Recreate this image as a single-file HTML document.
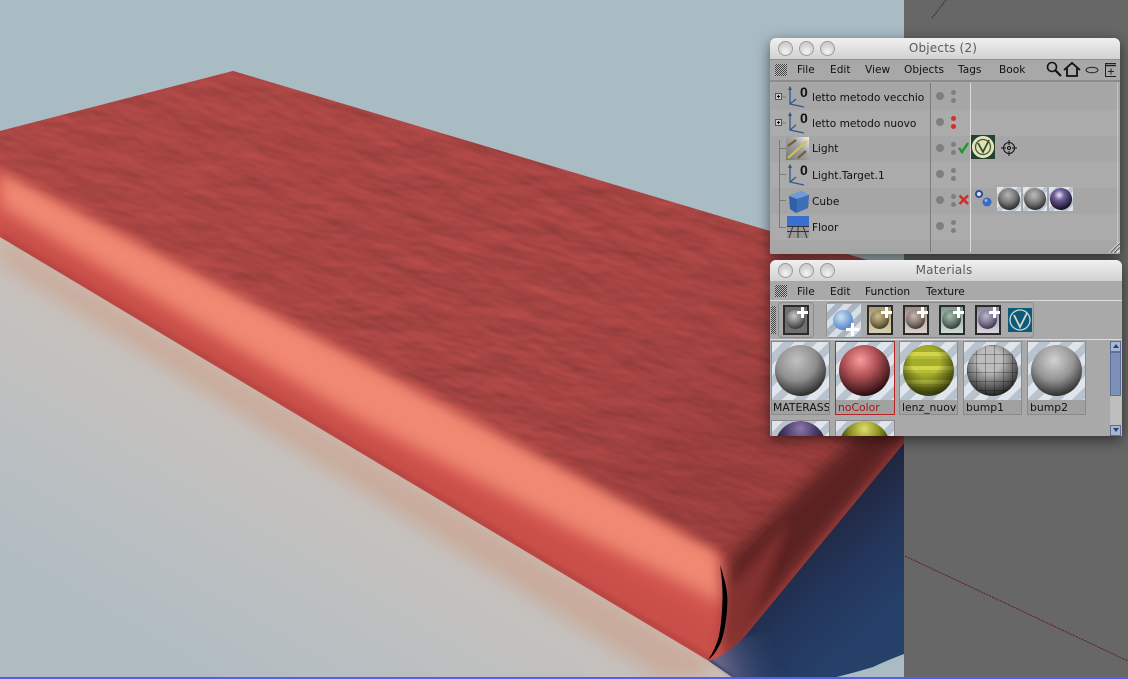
<!DOCTYPE html>
<html><head><meta charset="utf-8"><style>
html,body{margin:0;padding:0;background:#666;width:1128px;height:679px;overflow:hidden}
#p{position:relative;width:1128px;height:679px;overflow:hidden;font-family:"DejaVu Sans","Liberation Sans",sans-serif;color:#111}
svg{display:block}
.a,.t{position:absolute}
.t{white-space:nowrap;font-size:10.6px;line-height:14px}
.win{position:absolute;background:#a9a9a9;border-radius:6px 6px 1px 1px;box-shadow:0 4px 14px rgba(0,0,0,.55)}
.tb{position:absolute;left:0;right:0;top:0;height:21px;border-radius:6px 6px 0 0;background:linear-gradient(#f0f0f0,#d2d2d2)}
.tt{position:absolute;left:0;right:0;top:3px;text-align:center;font-size:12px;line-height:15px;color:#5a5a5a;letter-spacing:.2px}
.btn{position:absolute;top:3px;width:13px;height:13px;border-radius:50%;background:radial-gradient(circle at 50% 75%,#f4f4f4,#cdcdcd 70%);border:1px solid #9c9c9c}
.grip{position:absolute;width:12px;height:12px;background:repeating-conic-gradient(#444 0 25%,#bbb 0 50%) 0 0/2px 2px}
.row{position:absolute;left:1px;width:348px;height:26px}
.dot{position:absolute;border-radius:50%;background:#7f7f7f}
.big{width:8px;height:8px;left:166px}
.sm{width:5px;height:5px;left:181px}
.sp{position:absolute;border-radius:50%}
.thumb{position:absolute;width:59px;height:74px;border:1px solid #8b8b8b;box-sizing:border-box;background:repeating-linear-gradient(135deg,#dfe5ec 0 8px,#b9c3cd 8px 16px);overflow:hidden}
.thumb .sp{left:3px;top:3px;width:51px;height:51px}
.cap{position:absolute;left:0;right:0;bottom:0;height:14px;background:#a1a1a1;font-size:10.8px;line-height:15px;padding-left:2px;white-space:nowrap;overflow:hidden}
.mini{position:absolute;width:24px;height:24px;background:repeating-linear-gradient(135deg,#dfe5ec 0 5px,#bcc6d0 5px 10px)}
.tool{position:absolute;width:26px;height:30px;box-sizing:border-box;border:2px solid #2b2b2b;top:45px}
.tool .sp{left:1px;top:3px;width:19px;height:19px}
.plus{position:absolute;width:11px;height:11px;right:-1px;top:0;background:linear-gradient(#fff,#fff) center/3px 100% no-repeat,linear-gradient(#fff,#fff) center/100% 3px no-repeat}
</style></head><body><div id="p">
<svg class="a" style="left:0;top:0" width="1128" height="679" viewBox="0 0 1128 679">
<defs>
<linearGradient id="floor" gradientUnits="userSpaceOnUse" x1="350" y1="446" x2="207" y2="687"><stop offset="0" stop-color="#cbbeb5"/><stop offset=".15" stop-color="#c6c1bd"/><stop offset=".45" stop-color="#bec0c0"/><stop offset="1" stop-color="#b0bcc2"/></linearGradient>
<linearGradient id="shad" gradientUnits="userSpaceOnUse" x1="780" y1="530" x2="870" y2="630"><stop offset="0" stop-color="#1f2134"/><stop offset=".55" stop-color="#23355a"/><stop offset="1" stop-color="#254069"/></linearGradient>
<linearGradient id="fade" gradientUnits="userSpaceOnUse" x1="715" y1="672" x2="780" y2="650"><stop offset="0" stop-color="#7a7498" stop-opacity=".95"/><stop offset="1" stop-color="#243a62" stop-opacity="0"/></linearGradient>
<linearGradient id="topshade" gradientUnits="userSpaceOnUse" x1="300" y1="100" x2="640" y2="520"><stop offset="0" stop-color="#b84e4a" stop-opacity=".2"/><stop offset=".6" stop-color="#a84444" stop-opacity="0"/><stop offset="1" stop-color="#7a2f30" stop-opacity=".3"/></linearGradient>
<filter id="b2"><feGaussianBlur stdDeviation="2"/></filter>
<filter id="b5"><feGaussianBlur stdDeviation="5"/></filter>
<filter id="b6" x="-10%" y="-10%" width="120%" height="120%"><feGaussianBlur stdDeviation="6"/></filter>
<filter id="b7" x="-10%" y="-10%" width="120%" height="120%"><feGaussianBlur stdDeviation="8"/></filter>
<filter id="b10" x="-10%" y="-20%" width="120%" height="140%"><feGaussianBlur stdDeviation="9"/></filter>
<filter id="wr" filterUnits="userSpaceOnUse" x="0" y="-10" width="960" height="340" color-interpolation-filters="sRGB"><feTurbulence type="fractalNoise" baseFrequency="0.02 0.05" numOctaves="3" seed="11"/><feGaussianBlur stdDeviation="0.7"/><feDiffuseLighting surfaceScale="1.300" diffuseConstant="1.200" lighting-color="#a74543"><feDistantLight azimuth="250" elevation="56"/></feDiffuseLighting></filter>
<clipPath id="mat"><path d="M233 71L904 271V443L745 636Q728 654 709 661L0 237V131Z"/></clipPath>
<mask id="mk" maskUnits="userSpaceOnUse" x="0" y="0" width="1128" height="679"><polygon points="-60,60 300,20 960,230 960,430 735,565 717,550 350,352 0,168 -60,135" fill="#fff" filter="url(#b6)"/></mask>
</defs>
<rect width="904" height="679" fill="#a9bcc4"/>
<polygon points="0,236 720,662 770,679 0,679" fill="url(#floor)"/>
<polygon points="0,238 715,664 700,679 660,679 0,262" fill="#c98e72" opacity=".4" filter="url(#b10)"/>
<path d="M904 425V654Q888 660 873 667Q850 674 828 679H735L700 655Z" fill="url(#shad)"/>
<path d="M700 652L735 679H790L770 630Z" fill="url(#fade)" filter="url(#b2)"/>
<g clip-path="url(#mat)">
<rect width="904" height="679" fill="#cf524c"/>
<polygon points="0,215 350,425 580,555 720,630 720,661 0,240" fill="#c9504a" filter="url(#b5)"/>
<polygon points="0,168 350,352 720,548 725,605 583,535 350,414 0,206" fill="#f08872" filter="url(#b7)"/>
<polygon points="0,232 0,238 709,662 711,656" fill="#a83e3c" filter="url(#b2)" opacity=".6"/>
<g mask="url(#mk)">
<g transform="rotate(17)"><rect x="0" y="-10" width="960" height="340" filter="url(#wr)"/></g>
<rect width="904" height="679" fill="url(#topshade)"/>
</g>
<polygon points="726,562 850,442 904,395 904,443 745,636 726,660 729,600" fill="#5b2323" filter="url(#b7)"/>
<polygon points="728,590 790,520 745,640 726,662" fill="#8a3433" filter="url(#b5)" opacity=".8"/>
</g>
<path d="M720 565Q727 585 727.500 600Q727 625 721 642Q715 655 708 660Q716 648 719 636Q722 620 722.500 600Q723 585 720 565Z" fill="#000"/>
<rect x="904" width="224" height="679" fill="#676767"/>
<line x1="905" y1="556" x2="1128" y2="661" stroke="#5c1f1f" stroke-width="1" stroke-dasharray="2 1"/>
<line x1="946" y1="0" x2="932" y2="18" stroke="#3f2b2b" stroke-width="1" stroke-dasharray="2 1"/>
<rect y="677" width="1128" height="2" fill="#5b5bf0"/>
</svg>

<!-- Objects -->
<div class="win" style="left:770px;top:38px;width:350px;height:216px">
<div class="tb"></div>
<div class="btn" style="left:8px"></div><div class="btn" style="left:29px"></div><div class="btn" style="left:50px"></div>
<div class="tt" style="left:-2px;right:2px">Objects (2)</div>
<div class="a" style="left:0;right:0;top:21px;height:23px;background:#a8a8a8;border-top:1px solid #8e8e8e;border-bottom:2px solid #8c8c8c;box-sizing:border-box"></div>
<div class="grip" style="left:5px;top:26px"></div>
<div class="t" style="left:27px;top:25px">File</div>
<div class="t" style="left:60px;top:25px">Edit</div>
<div class="t" style="left:95px;top:25px">View</div>
<div class="t" style="left:134px;top:25px">Objects</div>
<div class="t" style="left:188px;top:25px">Tags</div>
<div class="t" style="left:229px;top:25px">Book</div>
<svg class="a" style="left:276px;top:22px" width="70" height="20" viewBox="0 0 70 20">
<circle cx="6" cy="7" r="4.500" fill="none" stroke="#111" stroke-width="1.600"/><path d="M9.500 10.500L15 16" stroke="#111" stroke-width="2.200"/>
<path d="M18 10L26 3L34 10M21 8V16H31V8" fill="none" stroke="#111" stroke-width="1.800"/>
<ellipse cx="46" cy="10" rx="6" ry="2.800" fill="none" stroke="#222" stroke-width="1"/>
<rect x="59.500" y="3.500" width="11" height="13" fill="none" stroke="#222"/><path d="M59 5.500H71" stroke="#222" stroke-width="1.500"/><path d="M65 8.500V14.500M62 11.500H68" stroke="#222"/>
</svg>
<div class="a" style="left:1px;right:2px;top:45px;height:169px;background:#a7a7a7"></div>
<div class="row" style="top:46px;background:#a6a6a6"></div>
<div class="row" style="top:72px;background:#ababab"></div>
<div class="row" style="top:98px;background:#a6a6a6"></div>
<div class="row" style="top:124px;background:#ababab"></div>
<div class="row" style="top:150px;background:#a6a6a6"></div>
<div class="row" style="top:176px;background:#ababab"></div>
<div class="a" style="left:160px;top:45px;width:1px;height:169px;background:#7c7c7c"></div>
<div class="a" style="left:200px;top:45px;width:1px;height:169px;background:#dcdcdc"></div>
<div class="a" style="right:2px;top:45px;width:1px;height:169px;background:#c4c4c4"></div>
<svg class="a" style="left:0;top:44px" width="40" height="170" viewBox="0 0 40 170">
<path d="M9.500 58V145.500H16M9.500 66.500H16M9.500 92.500H16M9.500 118.500H16" fill="none" stroke="#7a7a7a"/>
<path d="M12 15H16M12 41H16" stroke="#7a7a7a"/>
<rect x="5.500" y="11.500" width="6" height="6" fill="#c9c9c9" stroke="#555"/><path d="M7 14.500H10M8.500 13V16" stroke="#111"/>
<rect x="5.500" y="37.500" width="6" height="6" fill="#c9c9c9" stroke="#555"/><path d="M7 40.500H10M8.500 39V42" stroke="#111"/>
</svg>
<svg class="a" style="left:15px;top:46px" width="26" height="160" viewBox="0 0 26 160">
<g><path d="M5 3V20L19 23M5 20L11 15" fill="none" stroke="#33598c" stroke-width="1.300"/><path d="M3 6L5 2L7 6Z" fill="#33598c"/><text x="15" y="13" font-family="Liberation Sans" font-weight="bold" font-size="14" fill="#111">0</text></g>
<g transform="translate(0,26)"><path d="M5 3V20L19 23M5 20L11 15" fill="none" stroke="#33598c" stroke-width="1.300"/><path d="M3 6L5 2L7 6Z" fill="#33598c"/><text x="15" y="13" font-family="Liberation Sans" font-weight="bold" font-size="14" fill="#111">0</text></g>
<g transform="translate(0,78)"><path d="M5 3V20L19 23M5 20L11 15" fill="none" stroke="#33598c" stroke-width="1.300"/><path d="M3 6L5 2L7 6Z" fill="#33598c"/><text x="15" y="13" font-family="Liberation Sans" font-weight="bold" font-size="14" fill="#111">0</text></g>
</svg>
<svg class="a" style="left:16px;top:99px" width="23" height="23" viewBox="0 0 23 23"><defs><linearGradient id="lg" x1="0" y1="1" x2="1" y2="0"><stop offset="0" stop-color="#777"/><stop offset=".6" stop-color="#a5a5a5"/><stop offset="1" stop-color="#f2f2f2"/></linearGradient></defs><rect width="23" height="23" fill="url(#lg)"/><path d="M2 21L21 4" stroke="#d7c34a" stroke-width="2"/><path d="M2 9L10 3M12 21L20 14" stroke="#6e6330" stroke-width="2.200"/></svg>
<svg class="a" style="left:18px;top:153px" width="22" height="22" viewBox="0 0 22 22"><path d="M1 5L13 0L21 4L20 17L8 22L2 18Z" fill="#2f5fa6"/><path d="M1 5L13 0L21 4L9 8Z" fill="#6f9bd8"/><path d="M9 8L21 4L20 17L8 22Z" fill="#3e6eb6"/></svg>
<svg class="a" style="left:17px;top:178px" width="22" height="22" viewBox="0 0 22 22"><rect width="22" height="10" fill="#3a6fd0"/><rect y="10" width="22" height="12" fill="#9a9a9a"/><path d="M0 10.500H22M0 15.500H22M6 10L2 22M11 10V22M16 10L20 22" stroke="#333"/></svg>
<div class="t" style="left:42px;top:53px">letto metodo vecchio</div>
<div class="t" style="left:42px;top:79px">letto metodo nuovo</div>
<div class="t" style="left:42px;top:104px">Light</div>
<div class="t" style="left:42px;top:131px">Light.Target.1</div>
<div class="t" style="left:42px;top:157px">Cube</div>
<div class="t" style="left:42px;top:183px">Floor</div>
<div class="dot big" style="top:54px"></div><div class="dot sm" style="top:52px"></div><div class="dot sm" style="top:60px"></div>
<div class="dot big" style="top:80px"></div><div class="dot sm" style="top:78px;background:#d22f28"></div><div class="dot sm" style="top:86px;background:#d22f28"></div>
<div class="dot big" style="top:106px"></div><div class="dot sm" style="top:104px"></div><div class="dot sm" style="top:112px"></div>
<div class="dot big" style="top:132px"></div><div class="dot sm" style="top:130px"></div><div class="dot sm" style="top:138px"></div>
<div class="dot big" style="top:158px"></div><div class="dot sm" style="top:156px"></div><div class="dot sm" style="top:164px"></div>
<div class="dot big" style="top:184px"></div><div class="dot sm" style="top:182px"></div><div class="dot sm" style="top:190px"></div>
<svg class="a" style="left:188px;top:103px" width="12" height="14" viewBox="0 0 12 14"><path d="M1 7L4 11L10 2" fill="none" stroke="#1d9a28" stroke-width="2.400"/></svg>
<svg class="a" style="left:188px;top:156px" width="12" height="12" viewBox="0 0 12 12"><path d="M1.500 1.500L10 10M10 1.500L1.500 10" stroke="#cc2f2a" stroke-width="2.600"/></svg>
<svg class="a" style="left:201px;top:97px" width="24" height="24" viewBox="0 0 24 24"><rect width="24" height="24" fill="#24402f"/><circle cx="12" cy="12" r="10.500" fill="#dfe2b2" stroke="#eef0cc"/><circle cx="12" cy="12" r="7.500" fill="none" stroke="#4a5a3c" stroke-width="1.300"/><path d="M7 8L12 17L18 5" fill="none" stroke="#3c4c30" stroke-width="1.800"/></svg>
<svg class="a" style="left:231px;top:101px" width="16" height="18" viewBox="0 0 16 18"><circle cx="8" cy="9" r="5.500" fill="none" stroke="#111"/><circle cx="8" cy="9" r="1.500" fill="none" stroke="#111"/><path d="M8 1V6M8 12V17M0 9H5M11 9H16" stroke="#111"/></svg>
<svg class="a" style="left:203px;top:150px" width="22" height="22" viewBox="0 0 22 22"><circle cx="6" cy="6" r="3" fill="#dfe6f2" stroke="#2c4f96" stroke-width="2"/><circle cx="14" cy="14" r="4.500" fill="#3a68c4"/><circle cx="13" cy="12.500" r="1.500" fill="#8fb0e8"/></svg>
<div class="mini" style="left:227px;top:149px"><div class="sp" style="left:1px;top:1px;width:22px;height:22px;background:radial-gradient(circle 16px at 45% 32%,#b5b5b5,#777 50%,#1c1c1c)"></div></div>
<div class="mini" style="left:253px;top:149px"><div class="sp" style="left:1px;top:1px;width:22px;height:22px;background:radial-gradient(circle 16px at 45% 32%,#bdbdbd,#7c7c7c 50%,#202020)"></div></div>
<div class="mini" style="left:279px;top:149px"><div class="sp" style="left:1px;top:1px;width:22px;height:22px;background:radial-gradient(circle 15px at 42% 32%,#eee6f6,#71609a 35%,#120e20)"></div></div>
<svg class="a" style="left:339px;top:204px" width="11" height="11" viewBox="0 0 11 11"><path d="M0 11L11 0M4 11L11 4M8 11L11 8" stroke="#eee"/><path d="M1 11L11 1M5 11L11 5" stroke="#666"/></svg>
</div>

<!-- Materials -->
<div class="win" style="left:770px;top:260px;width:352px;height:176px">
<div class="tb"></div>
<div class="btn" style="left:8px"></div><div class="btn" style="left:29px"></div><div class="btn" style="left:50px"></div>
<div class="tt" style="left:-2px;right:2px">Materials</div>
<div class="grip" style="left:5px;top:25px"></div>
<div class="t" style="left:27px;top:25px">File</div>
<div class="t" style="left:60px;top:25px">Edit</div>
<div class="t" style="left:95px;top:25px">Function</div>
<div class="t" style="left:156px;top:25px">Texture</div>
<div class="a" style="left:0;right:0;top:40px;height:1px;background:#dcdcdc"></div>
<div class="a" style="left:0;right:0;top:79px;height:1px;background:#ddd"></div>
<div class="grip" style="left:1px;top:46px;width:5px;height:28px"></div>
<div class="a" style="left:8px;top:42px;width:36px;height:36px;border:1px solid #8d8d8d;border-radius:4px;box-sizing:border-box"></div>
<div class="a" style="left:56px;top:42px;width:208px;height:36px;border:1px solid #8d8d8d;border-radius:4px;box-sizing:border-box"></div>
<div class="tool" style="left:13px;background:#6f6f6f"><div class="sp" style="background:radial-gradient(circle 15px at 42% 32%,#c9c9c9,#777 50%,#222)"></div><div class="plus"></div></div>
<div class="a" style="left:57px;top:44px;width:34px;height:33px;background:repeating-linear-gradient(135deg,#d7dee8 0 6px,#a9b4c0 6px 12px)"><div class="sp" style="left:6px;top:6px;width:20px;height:20px;background:radial-gradient(circle at 40% 35%,#cfe0f4,#5b8ccb 70%,#335a94)"></div><div class="plus" style="left:19px;top:19px;width:13px;height:13px"></div></div>
<div class="tool" style="left:97px;background:linear-gradient(#a89a70,#d8d0ae)"><div class="sp" style="background:radial-gradient(circle 15px at 42% 32%,#cbbd93,#887b55 50%,#2f2a1a)"></div><div class="plus"></div></div>
<div class="tool" style="left:133px;background:linear-gradient(#9a8a82,#dcd2cb)"><div class="sp" style="background:radial-gradient(circle 15px at 42% 32%,#c8bab1,#867870 50%,#2b2424)"></div><div class="plus"></div></div>
<div class="tool" style="left:169px;background:linear-gradient(#80988a,#cfdcd3)"><div class="sp" style="background:radial-gradient(circle 15px at 42% 32%,#a8bdb0,#667a6e 50%,#1d2923)"></div><div class="plus"></div></div>
<div class="tool" style="left:205px;background:linear-gradient(#8e889e,#d8d4e0)"><div class="sp" style="background:radial-gradient(circle 15px at 42% 32%,#bdb7cd,#7a748c 50%,#26223a)"></div><div class="plus"></div></div>
<svg class="a" style="left:238px;top:48px" width="24" height="24" viewBox="0 0 24 24"><rect width="24" height="24" fill="#0b5a7c"/><circle cx="12" cy="12" r="10" fill="none" stroke="#d8d8c8" stroke-width="1.300"/><path d="M6 7L12 19L19 5" fill="none" stroke="#d8d8c8" stroke-width="1.800"/></svg>

<div class="thumb" style="left:1px;top:81px"><div class="sp" style="background:radial-gradient(circle 40px at 42% 30%,#c2c2c2,#8f8f8f 50%,#202020 95%)"></div><div class="cap" style="padding-left:1px">MATERASS</div></div>
<div class="thumb" style="left:65px;top:81px;border:1.500px solid #b52424;width:60px"><div class="sp" style="background:radial-gradient(circle 40px at 42% 30%,#f79c9c,#ae5054 42%,#24090d 92%)"></div><div class="cap" style="color:#b01010">noColor</div></div>
<div class="thumb" style="left:129px;top:81px"><div class="sp" style="background:radial-gradient(circle 40px at 45% 32%,transparent 35%,rgba(10,15,0,.9) 95%),repeating-linear-gradient(#a3ad2c 0 7px,#d1d54a 7px 11px,#b5bd38 11px 14px)"></div><div class="cap">lenz_nuovo</div></div>
<div class="thumb" style="left:193px;top:81px;width:59px"><div class="sp" style="background:radial-gradient(circle 40px at 45% 30%,transparent 30%,rgba(0,0,0,.9) 95%),repeating-linear-gradient(rgba(60,60,60,.4) 0 1px,transparent 1px 9px),repeating-linear-gradient(90deg,rgba(60,60,60,.4) 0 1px,transparent 1px 9px),#bcbcbc"></div><div class="cap">bump1</div></div>
<div class="thumb" style="left:257px;top:81px"><div class="sp" style="background:radial-gradient(circle 40px at 45% 30%,#d2d2d2,#939393 50%,#202020 95%)"></div><div class="cap">bump2</div></div>
<div class="a" style="left:1px;top:160px;width:59px;height:16px;overflow:hidden;border:1px solid #8b8b8b;border-bottom:0;box-sizing:border-box;background:repeating-linear-gradient(135deg,#dfe5ec 0 8px,#b9c3cd 8px 16px)"><div class="sp" style="left:3px;top:0;width:51px;height:51px;background:radial-gradient(circle at 50% 15%,#8c78ae,#4c3a68 30%,#1a1224 60%)"></div></div>
<div class="a" style="left:65px;top:160px;width:60px;height:16px;overflow:hidden;border:1px solid #8b8b8b;border-bottom:0;box-sizing:border-box;background:repeating-linear-gradient(135deg,#dfe5ec 0 8px,#b9c3cd 8px 16px)"><div class="sp" style="left:3px;top:0;width:51px;height:51px;background:radial-gradient(circle at 50% 15%,#dede6e,#8a8e20 30%,#1a1c04 60%)"></div></div>
<div class="a" style="left:340px;top:81px;width:12px;height:95px;background:#bdbdbd"></div>
<div class="a" style="left:340px;top:81px;width:11px;height:11px;background:#a9b6cf;border:1px solid #5e6f97;box-sizing:border-box"></div>
<div class="a" style="left:343px;top:84px;width:0;height:0;border-left:3px solid transparent;border-right:3px solid transparent;border-bottom:4px solid #26407a"></div>
<div class="a" style="left:340px;top:92px;width:11px;height:44px;background:#7d90b8;border:1px solid #5e6f97;box-sizing:border-box"></div>
<div class="a" style="left:340px;top:165px;width:11px;height:11px;background:#a9b6cf;border:1px solid #5e6f97;box-sizing:border-box"></div>
<div class="a" style="left:343px;top:168px;width:0;height:0;border-left:3px solid transparent;border-right:3px solid transparent;border-top:4px solid #26407a"></div>
</div>
</div></body></html>
